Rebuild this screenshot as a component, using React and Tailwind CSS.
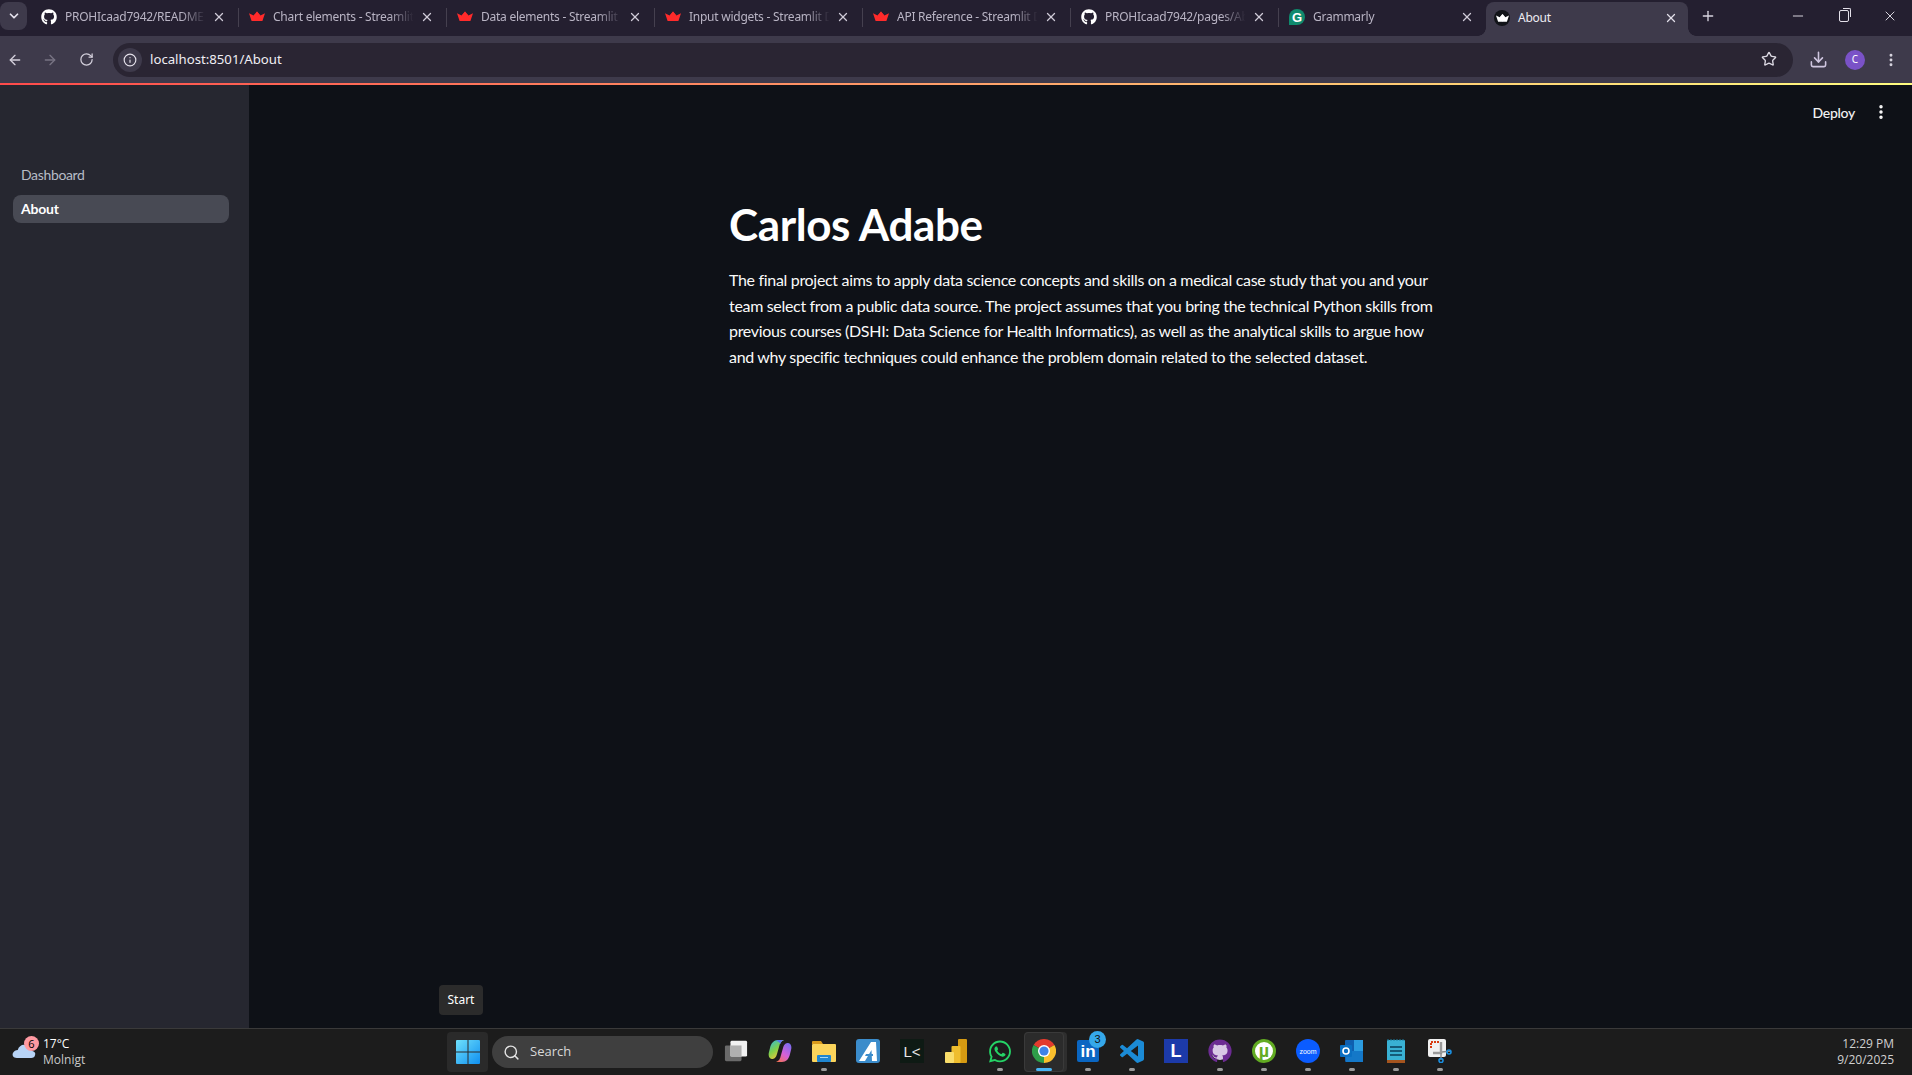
import React from "react";
import { FaGithub, FaWhatsapp } from "react-icons/fa";
import { ArrowLeft, ArrowRight, RotateCw, Info, Star, Download, EllipsisVertical, Plus, Minus, X, ChevronDown, Search } from "lucide-react";

const Crown = ({ color = "#ff2b2b", size = 16 }) => (
  <svg width={size} height={size} viewBox="0 0 16 16">
    <path d="M0 4.2 L4.6 6.6 L8 2.6 L11.4 6.6 L16 4.2 L13.4 12 L2.6 12 Z" fill={color} />
    <path d="M4.6 6.6 L8 2.6 L11.4 6.6 L8 12 Z" fill={color} opacity="0.7" />
  </svg>
);

const Grammarly = () => (
  <span className="flex h-4 w-4 items-center justify-center rounded-full rounded-bl-none bg-[#0f8a6d] text-[13px] leading-none font-bold text-white [font-family:'Liberation_Sans',sans-serif]">G</span>
);

const tabs = [
  { title: "PROHIcaad7942/README", icon: <FaGithub size={16} color="#ffffff" /> },
  { title: "Chart elements - Streamlit Docs", icon: <Crown /> },
  { title: "Data elements - Streamlit Docs", icon: <Crown /> },
  { title: "Input widgets - Streamlit Docs", icon: <Crown /> },
  { title: "API Reference - Streamlit Docs", icon: <Crown /> },
  { title: "PROHIcaad7942/pages/About", icon: <FaGithub size={16} color="#ffffff" /> },
  { title: "Grammarly", icon: <Grammarly /> },
];

function TabStrip() {
  return (
    <div className="flex h-[36px] items-stretch bg-[#241f30] text-[12px] tracking-[-0.25px] [font-family:'Noto_Sans',sans-serif]">
      <div className="w-[30px] pt-[2px]">
        <div className="flex h-[28px] w-[27px] items-center justify-center rounded-lg bg-[#3e3a4b]">
          <ChevronDown size={14} color="#e6e3ee" strokeWidth={3} />
        </div>
      </div>
      {tabs.map((t, i) => (
        <div key={t.title} className="flex h-[34px] w-[208px] items-center pl-[11px]">
          <div className="flex h-full w-0 items-center">
            {i > 0 && <div className="-ml-[11px] h-[19px] w-px shrink-0 bg-[#45404f]" />}
          </div>
          <div className="flex h-4 w-4 shrink-0 items-center justify-center">{t.icon}</div>
          <span className="ml-2 w-[145px] overflow-hidden whitespace-nowrap text-[#b9b4c4] [mask-image:linear-gradient(to_right,#000_80%,transparent_97%)]">{t.title}</span>
          <X size={14} color="#cfcbd8" strokeWidth={2.2} className="ml-[2px]" />
        </div>
      ))}
      <div className="relative mt-[2px] flex w-[202px] items-center rounded-t-lg bg-[#3e3a4b] pb-[2px] pl-[8px]">
        <div className="absolute bottom-0 -left-2 h-2 w-2 bg-[radial-gradient(circle_at_0_0,transparent_7.5px,#3e3a4b_8px)]" />
        <div className="absolute -right-2 bottom-0 h-2 w-2 bg-[radial-gradient(circle_at_100%_0,transparent_7.5px,#3e3a4b_8px)]" />
        <div className="flex h-4 w-4 items-center justify-center rounded-full bg-[#111318]"><Crown color="#ffffff" size={13} /></div>
        <span className="ml-2 w-[138px] text-[#eeecf3]">About</span>
        <X size={14} color="#e2dfe9" strokeWidth={2.2} className="ml-[8px]" />
      </div>
      <div className="ml-[8px] flex w-[24px] items-center justify-center pb-[5px]">
        <Plus size={16} color="#d8d5e0" strokeWidth={2} />
      </div>
      <div className="flex flex-1 items-start justify-end pt-[8px] pr-[14px]">
        <div className="flex items-center gap-[33px]">
          <Minus size={16} color="#e4e1ea" strokeWidth={1.4} />
          <div className="relative h-3 w-[10px] rounded-[2px] border border-[#e4e1ea]">
            <div className="absolute -top-[3px] -right-[3px] h-[9px] w-[8px] rounded-tr-[2px] border-t border-r border-[#e4e1ea]" />
          </div>
          <X size={16} color="#e4e1ea" strokeWidth={1.4} />
        </div>
      </div>
    </div>
  );
}

function Toolbar() {
  return (
    <div className="flex h-[47px] items-center bg-[#3e3a4b] [font-family:'Noto_Sans',sans-serif]">
      <div className="flex w-[113px] items-center pl-[7px]">
        <ArrowLeft size={16} color="#d4d0dc" strokeWidth={2} />
        <ArrowRight size={16} color="#787484" strokeWidth={2} className="ml-[19px]" />
        <RotateCw size={15} color="#d4d0dc" strokeWidth={2} className="ml-[21px]" />
      </div>
      <div className="flex h-[34px] w-[1680px] items-center rounded-full bg-[#2a2533] pr-[16px] pl-[5px]">
        <div className="flex h-6 w-6 items-center justify-center rounded-full bg-[#3e3a4b]">
          <Info size={14} color="#e4e1ea" strokeWidth={2} />
        </div>
        <span className="ml-[8px] flex-1 text-[13.2px] text-[#f0eef4]">localhost:8501/About</span>
        <Star size={16} color="#dcd9e3" strokeWidth={2} className="-translate-y-[1px]" />
      </div>
      <Download size={19} color="#cfc6e0" strokeWidth={2} className="ml-[16px]" />
      <div className="ml-[17px] flex h-5 w-5 items-center justify-center rounded-full bg-[#7a52c7] text-[10px] text-white">C</div>
      <EllipsisVertical size={16} color="#d8d5e0" strokeWidth={2.4} className="ml-[18px]" />
    </div>
  );
}

function Sidebar() {
  return (
    <aside className="w-[249px] shrink-0 bg-[#262730] px-[13px] pt-[76px] text-[14px] leading-[28px] [font-family:Lato,sans-serif]">
      <div className="px-2 tracking-[-0.35px] text-[#b6bcc6]">Dashboard</div>
      <div className="mt-[6px] h-[28px] w-[216px] rounded-lg bg-[#484a54] px-2 font-bold tracking-[-0.2px] text-white">About</div>
    </aside>
  );
}

function Main() {
  return (
    <main className="relative flex-1 bg-[#0e1117] text-white [font-family:Lato,sans-serif]">
      <div className="flex h-[54px] items-center justify-end pr-[22px]">
        <span className="text-[14px] font-medium tracking-[-0.3px] text-[#f2f2f2]">Deploy</span>
        <EllipsisVertical size={18} color="#ffffff" strokeWidth={2.6} className="ml-[17px]" />
      </div>
      <div className="pt-[57px] pl-[480px]">
        <h1 className="text-[44px] leading-[56px] font-bold tracking-[-0.4px]">Carlos Adabe</h1>
        <p className="mt-[15px] text-[16px] leading-[25.6px] tracking-[-0.32px] whitespace-nowrap text-[#fafafa]">
          The final project aims to apply data science concepts and skills on a medical case study that you and your<br />
          team select from a public data source. The project assumes that you bring the technical Python skills from<br />
          previous courses (DSHI: Data Science for Health Informatics), as well as the analytical skills to argue how<br />
          and why specific techniques could enhance the problem domain related to the selected dataset.
        </p>
      </div>
      <div className="absolute top-[900px] left-[190px] flex h-[30px] w-[44px] items-center justify-center rounded bg-[#2b2b2b] text-[12px] text-white [font-family:'Noto_Sans',sans-serif]">Start</div>
    </main>
  );
}

const TaskView = () => (
  <svg width="26" height="24" viewBox="0 0 26 24">
    <rect x="1" y="6" width="18" height="17" rx="1.5" fill="#6a6a6a" />
    <rect x="7" y="1" width="18" height="17" rx="1.5" fill="#f2f2f2" />
    <rect x="7" y="6" width="12" height="12" fill="#b0b0b0" />
  </svg>
);
const Copilot = () => (
  <svg width="24" height="24" viewBox="0 0 24 24">
    <defs>
      <linearGradient id="cp1" x1="0" y1="0" x2="0.6" y2="1"><stop offset="0" stopColor="#2fb7e8" /><stop offset="0.55" stopColor="#7fd04a" /><stop offset="1" stopColor="#f7c63b" /></linearGradient>
      <linearGradient id="cp2" x1="0.8" y1="0" x2="0.2" y2="1"><stop offset="0" stopColor="#7a6cf0" /><stop offset="0.55" stopColor="#d560d8" /><stop offset="1" stopColor="#f2705a" /></linearGradient>
      <linearGradient id="cp3" x1="0" y1="0" x2="1" y2="0"><stop offset="0" stopColor="#3f7fe8" /><stop offset="1" stopColor="#7a6cf0" /></linearGradient>
    </defs>
    <path d="M2 9 C3 4 6 1 10 1 H16 C13 2 12 4 11 8 L9 15 C8 19 6 20 4 20 C1 20 0 16 1 13 Z" fill="url(#cp1)" />
    <path d="M22 15 C21 20 18 23 14 23 H8 C11 22 12 20 13 16 L15 9 C16 5 18 4 20 4 C23 4 24 8 23 11 Z" fill="url(#cp2)" />
    <path d="M10 1 H16 C14 1.5 13 3 12.4 5 C11 3 10 2 8 2 Z" fill="url(#cp3)" />
  </svg>
);
const Folder = () => (
  <svg width="24" height="24" viewBox="0 0 24 24">
    <path d="M0 3 a1 1 0 0 1 1-1 h8 l2 3 H0 Z" fill="#d99a1c" />
    <rect x="0" y="5" width="24" height="18" rx="1" fill="#fbd45b" />
    <rect x="5" y="16" width="14" height="7" rx="1" fill="#1f86d0" />
    <rect x="8" y="18" width="8" height="1" fill="#a6d8f5" />
  </svg>
);
const AIcon = () => (
  <svg width="24" height="24" viewBox="0 0 24 24">
    <rect width="24" height="24" rx="3" fill="#3b8ccb" />
    <path d="M3 22 L15 3 L20 3 L21 22 L16 22 L15.5 11 L9 22 Z" fill="#ffffff" />
    <path d="M10 15 H17 V17 H9 Z" fill="#3b8ccb" />
  </svg>
);
const LK = () => (
  <div className="flex h-6 w-6 items-center justify-center bg-[#0e1a14] text-[15px] leading-none text-[#e8e8e8] [font-family:'Liberation_Sans',sans-serif]">L&lt;</div>
);
const PowerBI = () => (
  <svg width="24" height="24" viewBox="0 0 24 24">
    <rect x="14" y="0" width="9" height="24" rx="1" fill="#d59a12" />
    <rect x="7.5" y="7" width="9" height="17" rx="1" fill="#eebd2e" />
    <rect x="1" y="13" width="9" height="11" rx="1" fill="#f9dd6a" />
  </svg>
);
const Chrome = () => (
  <svg width="24" height="24" viewBox="0 0 24 24">
    <path d="M12 12 L22.4 6 A12 12 0 0 0 1.6 6 Z" fill="#e33b2e" />
    <path d="M12 12 L22.4 6 A12 12 0 0 1 12 24 Z" fill="#fbc02d" />
    <path d="M12 12 L12 24 A12 12 0 0 1 1.6 6 Z" fill="#2e9e49" />
    <circle cx="12" cy="12" r="6" fill="#ffffff" />
    <circle cx="12" cy="12" r="4.6" fill="#3f83e8" />
  </svg>
);
const VSCode = () => (
  <svg width="24" height="24" viewBox="0 0 24 24">
    <path fill="#1b8bd6" d="M23.15 2.587L18.21.21a1.494 1.494 0 0 0-1.705.29l-9.46 8.63-4.12-3.128a.999.999 0 0 0-1.276.057L.327 7.261A1 1 0 0 0 .326 8.74L3.899 12 .326 15.26a1 1 0 0 0 .001 1.479L1.65 17.94a.999.999 0 0 0 1.276.057l4.12-3.128 9.46 8.63a1.492 1.492 0 0 0 1.704.29l4.942-2.377A1.5 1.5 0 0 0 24 20.06V3.939a1.5 1.5 0 0 0-.85-1.352zm-5.146 14.861L10.826 12l7.178-5.448v10.896z" />
  </svg>
);
const Outlook = () => (
  <svg width="24" height="24" viewBox="0 0 24 24">
    <rect x="5" y="1" width="18" height="22" rx="1" fill="#0f5fb0" />
    <rect x="14" y="1" width="9" height="11" fill="#2c9ce0" />
    <path d="M5 12 L23 12 V23 H6 Z" fill="#1478c8" />
    <rect x="0" y="6" width="12" height="12" rx="1" fill="#0a6fc2" />
    <circle cx="6" cy="12" r="3" fill="none" stroke="#ffffff" strokeWidth="1.6" />
  </svg>
);
const Notepad = () => (
  <svg width="20" height="24" viewBox="0 0 20 24">
    <rect x="1" y="1" width="18" height="22" rx="1" fill="#39b1d4" />
    <rect x="1" y="21" width="18" height="3" fill="#a4541e" />
    <rect x="4" y="7" width="12" height="2" fill="#145a78" />
    <rect x="4" y="11" width="12" height="2" fill="#145a78" />
    <rect x="4" y="15" width="12" height="2" fill="#145a78" />
    <path d="M2 0 V2 M5 0 V2 M8 0 V2 M11 0 V2 M14 0 V2 M17 0 V2" stroke="#1d7fa0" strokeWidth="1" />
  </svg>
);
const Snip = () => (
  <svg width="24" height="24" viewBox="0 0 24 24">
    <rect x="0" y="0" width="18" height="18" rx="2" fill="#f0f0f0" />
    <path d="M3 9 V3 H12" fill="none" stroke="#d83b10" strokeWidth="2" strokeDasharray="2 1" />
    <path d="M13 3 V14 H5" fill="none" stroke="#9a9a9a" strokeWidth="2.4" />
    <path d="M14 13 L23 12 M13 14 L13 21" stroke="#8a8a8a" strokeWidth="1.4" />
    <circle cx="21" cy="13" r="2" fill="none" stroke="#1a8fe0" strokeWidth="1.6" />
    <circle cx="13" cy="21.5" r="2" fill="none" stroke="#1a8fe0" strokeWidth="1.6" />
  </svg>
);

const apps = [
  { icon: <TaskView /> },
  { icon: <Copilot /> },
  { icon: <Folder />, dot: true },
  { icon: <AIcon /> },
  { icon: <LK /> },
  { icon: <PowerBI /> },
  { icon: <FaWhatsapp size={25} color="#25d366" />, dot: true },
  { icon: <Chrome />, active: true },
  {
    icon: (
      <div className="relative flex h-[22px] w-[22px] items-end justify-center rounded-[2px] bg-[#0a66c2] text-[17px] leading-[20px] font-bold text-white [font-family:'Liberation_Sans',sans-serif]">
        in
        <div className="absolute -top-[9px] -right-[7px] flex h-[17px] w-[17px] items-center justify-center rounded-full bg-[#35a8ea] text-[11px] leading-none font-normal text-[#111]">3</div>
      </div>
    ),
    dot: true,
  },
  { icon: <VSCode />, dot: true },
  { icon: <div className="flex h-6 w-6 items-center justify-center bg-[#1c3aa9] text-[18px] leading-none font-bold text-white [font-family:'Liberation_Sans',sans-serif]">L</div> },
  {
    icon: (
      <div className="relative flex h-6 w-6 items-center justify-center">
        <div className="absolute h-[18px] w-[18px] rounded-full bg-[#d9c8e6]" />
        <FaGithub size={24} color="#6c2b93" className="relative" />
      </div>
    ),
    dot: true,
  },
  { icon: <div className="flex h-[24px] w-[24px] items-center justify-center rounded-full border-[3px] border-[#62ab22] bg-white text-[18px] leading-none font-bold text-[#62ab22] [font-family:'Liberation_Sans',sans-serif]">µ</div>, dot: true },
  { icon: <div className="flex h-6 w-6 items-center justify-center rounded-full bg-[#0b5cff] text-[7px] leading-none text-white [font-family:'Liberation_Sans',sans-serif]">zoom</div>, dot: true },
  { icon: <Outlook />, dot: true },
  { icon: <Notepad />, dot: true },
  { icon: <Snip />, dot: true },
];

function Taskbar() {
  return (
    <footer className="flex h-[47px] items-stretch border-t border-[#3a3a3a] bg-[#1c1c1c] text-[12px] text-white [font-family:'Open_Sans',sans-serif]">
      <div className="flex w-[447px] items-center pl-[12px]">
        <div className="relative h-[26px] w-[31px]">
          <svg width="24" height="14" viewBox="0 0 25 14" preserveAspectRatio="none" className="absolute top-[5px] left-0">
            <path d="M5 14 C1 14 0 11 1 9 C2 7 4 6 6 6 C7 2 11 0 14 1 C18 2 20 4 20 7 C23 7 25 9 24 11 C24 13 22 14 20 14 Z" fill="#b7d3f6" />
          </svg>
          <div className="absolute -top-[3px] left-[12px] flex h-[15px] w-[15px] items-center justify-center rounded-full bg-[#ff9aa2] text-[11px] leading-none text-black">6</div>
        </div>
        <div className="text-[12px] leading-[16px]">
          <div>17°C</div>
          <div className="text-[#c9c9c9]">Molnigt</div>
        </div>
      </div>
      <div className="flex items-center">
        <div className="flex h-[40px] w-[41px] items-center justify-center rounded bg-[#2a2a2a]">
          <svg width="24" height="24" viewBox="0 0 24 24">
            <defs>
              <linearGradient id="win" x1="0" y1="0" x2="1" y2="1"><stop offset="0" stopColor="#6fe0fb" /><stop offset="1" stopColor="#0f8ff0" /></linearGradient>
            </defs>
            <path d="M0 1 a1 1 0 0 1 1-1 H11.5 V11.5 H0 Z M12.5 0 H23 a1 1 0 0 1 1 1 V11.5 H12.5 Z M0 12.5 H11.5 V24 H1 a1 1 0 0 1-1-1 Z M12.5 12.5 H24 V23 a1 1 0 0 1-1 1 H12.5 Z" fill="url(#win)" />
          </svg>
        </div>
        <div className="ml-[4px] flex h-[32px] w-[221px] items-center rounded-full bg-[#3f3f3f] pl-[11px] text-[13px] text-[#d8d8d8]">
          <Search size={17} color="#e4e4e4" strokeWidth={2} />
          <span className="ml-[10px]">Search</span>
        </div>
        <div className="ml-[1px] flex h-full items-center">
          {apps.map((a, i) => (
            <div key={i} className="relative flex h-full w-[44px] items-center justify-center">
              {a.active && (
                <>
                  <div className="absolute top-[3px] left-[2px] h-[40px] w-[43px] rounded bg-[#2e2e2e]" />
                  <div className="absolute top-[3px] left-[2px] h-[40px] w-[40px] rounded border border-[#3a3a3a] bg-[#2b2b2b]" />
                </>
              )}
              <div className="relative flex h-6 w-6 -translate-y-[1px] items-center justify-center">{a.icon}</div>
              {a.dot && <div className="absolute bottom-[4px] left-[19px] h-[3px] w-[6px] rounded-full bg-[#9a9a9a]" />}
              {a.active && <div className="absolute bottom-[4px] left-[14px] h-[3px] w-[16px] rounded-full bg-[#47b5f5]" />}
            </div>
          ))}
        </div>
      </div>
      <div className="flex flex-1 flex-col items-end justify-center pr-[18px] text-[12px] leading-[16px] text-[#d0d0d0]">
        <div>12:29 PM</div>
        <div>9/20/2025</div>
      </div>
    </footer>
  );
}

export default function App() {
  return (
    <div className="flex h-[1075px] w-[1912px] flex-col overflow-hidden bg-[#0e1117]">
      <TabStrip />
      <Toolbar />
      <div className="h-[2px] bg-[linear-gradient(to_right,#ff4b4b,#ffa06a,#fffd80)]" />
      <div className="flex min-h-0 flex-1">
        <Sidebar />
        <Main />
      </div>
      <Taskbar />
    </div>
  );
}
